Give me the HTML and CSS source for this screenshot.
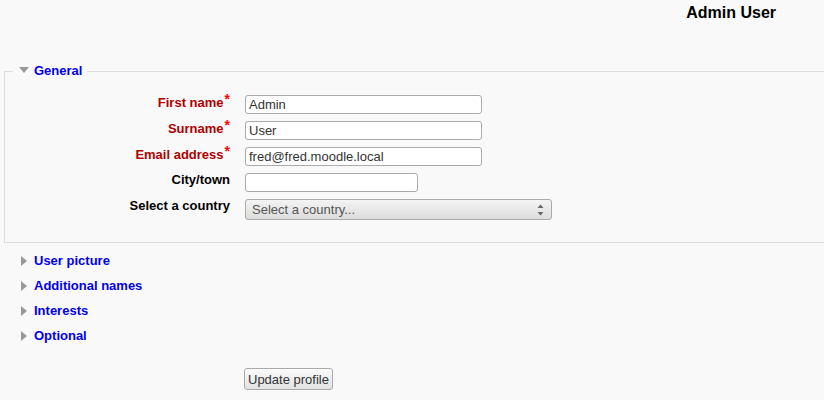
FILE: index.html
```html
<!doctype html>
<html>
<head>
    <link rel="stylesheet" href="styles.css">
</head>
<body>
    <div class="header">
        <h2 class="username">Admin User</h2>
    </div>
    <form class="profile">
        <fieldset class="section">
            <legend><span class="arrow-down"></span>General</legend>
            <div class="rows">
                <label class="req" for="firstname">First name<span class="star">*</span></label>
                <input id="firstname" class="text wide" type="text" value="Admin" />

                <label class="req" for="lastname">Surname<span class="star">*</span></label>
                <input id="lastname" class="text wide" type="text" value="User" />

                <label class="req" for="email">Email address<span class="star">*</span></label>
                <input id="email" class="text wide" type="text" value="fred@fred.moodle.local" />

                <label for="city">City/town</label>
                <input id="city" class="text short" type="text" value="" />

                <label for="country">Select a country</label>
                <span class="select-wrap">
                    <select id="country" class="country">
                        <option>Select a country...</option>
                    </select>
                    <svg class="spin" width="7" height="12" viewBox="0 0 7 12">
                        <path d="M3.5 0.5 L6.5 4 L0.5 4 Z" fill="#666" />
                        <path d="M3.5 11.5 L6.5 8 L0.5 8 Z" fill="#666" />
                    </svg>
                </span>
            </div>
        </fieldset>
        <div class="collapsed"><span class="arrow-right"></span>User picture</div>
        <div class="collapsed"><span class="arrow-right"></span>Additional names</div>
        <div class="collapsed"><span class="arrow-right"></span>Interests</div>
        <div class="collapsed"><span class="arrow-right"></span>Optional</div>
        <div class="actions">
            <button type="button">Update profile</button>
        </div>
    </form>
</body>
</html>
```

FILE: styles.css
```css
body {
    margin: 0;
    background: #f9f9f9;
    font-family: "Liberation Sans", Arial, sans-serif;
    font-size: 13px;
    color: #000;
    overflow: hidden;
}
.header {
    display: flex;
    justify-content: flex-end;
    padding: 4px 48px 0 0;
    height: 48px;
}
.username {
    margin: 0;
    font-size: 16px;
    font-weight: bold;
    line-height: 18px;
}
.section {
    margin: 11px 0 0 4px;
    padding: 16px 0 22px 0;
    border: 1px solid #ddd;
    border-right: 0;
    min-width: 0;
}
legend {
    margin-left: 8px;
    padding: 0 5px 0 6px;
    color: #00e;
    font-weight: bold;
    line-height: 16px;
}
.arrow-down {
    display: inline-block;
    width: 0;
    height: 0;
    border-left: 5px solid transparent;
    border-right: 5px solid transparent;
    border-top: 6px solid #999;
    margin-right: 5px;
    vertical-align: 2px;
}
.rows {
    display: grid;
    grid-template-columns: 225px auto;
    column-gap: 15px;
    row-gap: 7px;
    align-items: start;
    justify-items: start;
}
.rows label {
    justify-self: end;
    font-weight: bold;
    line-height: 15px;
    margin-top: -1px;
}
.rows label.req {
    color: #b00000;
}
.star {
    color: #f00;
    font-size: 14px;
    vertical-align: 3px;
    line-height: 10px;
    margin-left: 1px;
}
.text {
    box-sizing: border-box;
    height: 19px;
    margin: 0;
    padding: 0 3px;
    border: 1px solid #aaa;
    border-radius: 3px;
    background: #fff;
    font-family: "Liberation Sans", Arial, sans-serif;
    font-size: 13px;
    color: #333;
}
.wide {
    width: 237px;
}
.short {
    width: 173px;
}
.select-wrap {
    position: relative;
    display: inline-block;
}
.country {
    box-sizing: border-box;
    width: 307px;
    height: 21px;
    margin: 0;
    padding: 0 6px;
    border: 1px solid #aaa;
    border-radius: 3px;
    appearance: none;
    -webkit-appearance: none;
    background: linear-gradient(#f4f4f4, #dcdcdc);
    font-family: "Liberation Sans", Arial, sans-serif;
    font-size: 13px;
    color: #555;
}
.spin {
    position: absolute;
    right: 8px;
    top: 5px;
}
.collapsed {
    margin-left: 21px;
    color: #00e;
    font-weight: bold;
    line-height: 16px;
    height: 25px;
}
.section + .collapsed {
    margin-top: 10px;
}
.arrow-right {
    display: inline-block;
    width: 0;
    height: 0;
    border-top: 5px solid transparent;
    border-bottom: 5px solid transparent;
    border-left: 6px solid #999;
    margin-right: 7px;
    vertical-align: -1px;
}
.actions {
    padding: 0 0 0 244px;
    margin-top: 15px;
}
button {
    height: 22px;
    padding: 0 3px;
    border: 1px solid #aaa;
    border-radius: 3px;
    background: linear-gradient(#fafafa, #e2e2e2);
    font-family: "Liberation Sans", Arial, sans-serif;
    font-size: 13px;
    color: #333;
}
```
